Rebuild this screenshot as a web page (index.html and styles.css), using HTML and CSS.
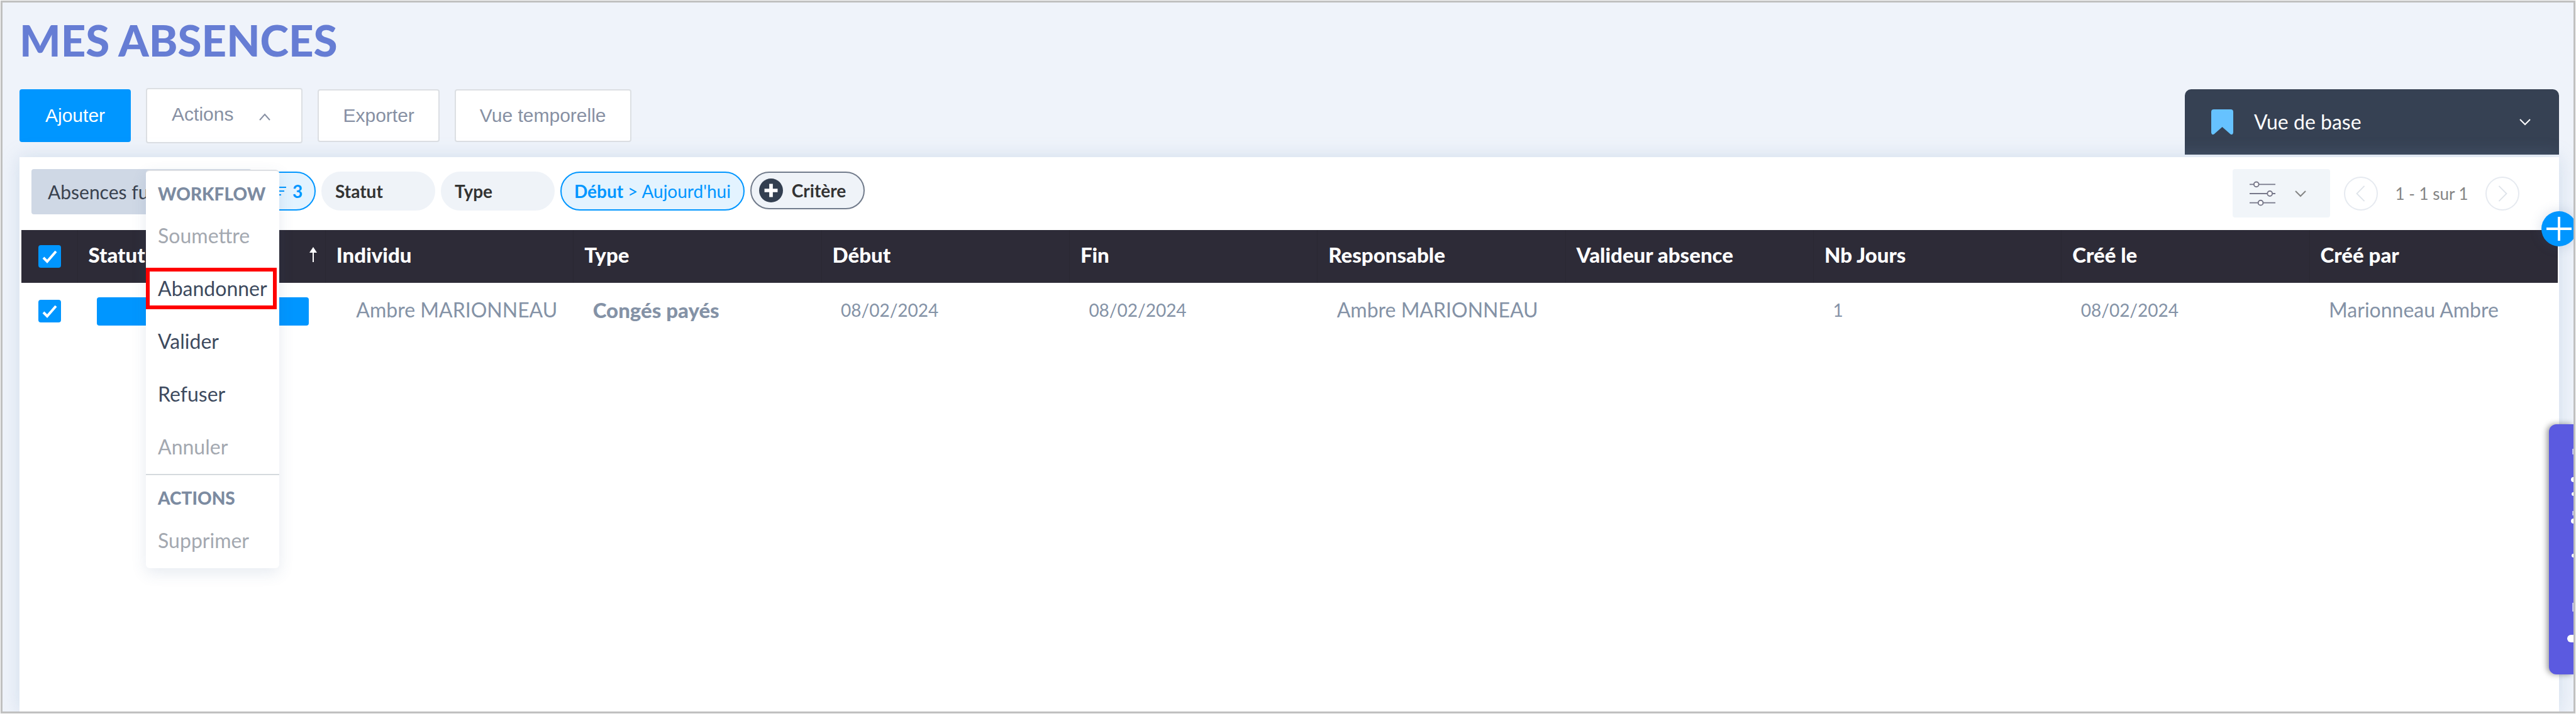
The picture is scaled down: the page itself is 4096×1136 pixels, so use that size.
FILE: index.html
```html
<!DOCTYPE html>
<html lang="fr">
<head>
<meta charset="utf-8">
<title>Mes absences</title>
<meta name="viewport" content="width=device-width, initial-scale=1">
<link rel="stylesheet" href="styles.css">
</head>
<body>
<div class="app">
  <h1 class="title">MES ABSENCES</h1>

  <div class="toolbar">
    <div class="toolbar-actions">
      <button class="btn btn-primary" type="button">Ajouter</button>
      <div class="dropdown">
        <button class="btn btn-dropdown" type="button" aria-haspopup="true" aria-expanded="true">Actions
          <svg class="chevron" viewBox="0 0 20 12" aria-hidden="true"><path d="M2 11 10 2l8 9"/></svg>
        </button>
        <div class="menu">
          <h2 class="menu-heading">WORKFLOW</h2>
          <ul class="menu-list">
            <li><button class="menu-item" type="button" disabled>Soumettre</button></li>
            <li><button class="menu-item menu-item-marked" type="button">Abandonner</button></li>
            <li><button class="menu-item" type="button">Valider</button></li>
            <li><button class="menu-item" type="button">Refuser</button></li>
            <li><button class="menu-item" type="button" disabled>Annuler</button></li>
          </ul>
          <h2 class="menu-heading menu-heading-split">ACTIONS</h2>
          <ul class="menu-list">
            <li><button class="menu-item" type="button" disabled>Supprimer</button></li>
          </ul>
        </div>
      </div>
      <button class="btn" type="button">Exporter</button>
      <button class="btn" type="button">Vue temporelle</button>
    </div>
    <button class="view-tab" type="button">
      <svg class="bookmark" viewBox="0 0 35 40" aria-hidden="true"><path d="M4 0h27q4 0 4 4v33q-1 5-5 2L17.500 28 5 39q-4 3-5-2V4q0-4 4-4z"/></svg>
      <span class="view-name">Vue de base</span>
      <svg class="chevron" viewBox="0 0 20 12" aria-hidden="true"><path d="M2 2l8 8 8-8"/></svg>
    </button>
  </div>

  <main class="panel">
    <div class="filters">
      <button class="saved-filter" type="button">Absences fu</button>
      <button class="chip chip-active chip-count" type="button">
        <svg class="lines" viewBox="0 0 24 16" aria-hidden="true"><path d="M0 2h24M4 8h17M8 14h8"/></svg>3
      </button>
      <button class="chip chip-wide" type="button">Statut</button>
      <button class="chip chip-wide" type="button">Type</button>
      <button class="chip chip-active" type="button"><span>Début <span class="chip-value">&gt; Aujourd'hui</span></span></button>
      <button class="chip chip-add" type="button">
        <svg class="add" viewBox="0 0 40 40" aria-hidden="true"><circle cx="20" cy="20" r="20"/><path d="M20 9v22M9 20h22"/></svg>Critère
      </button>
      <div class="paging">
        <button class="settings" type="button" aria-label="Affichage">
          <svg class="sliders" viewBox="0 0 42 40" aria-hidden="true"><path d="M0 5h42M0 20h42M0 35h42"/><circle cx="11" cy="5" r="4"/><circle cx="33" cy="20" r="4"/><circle cx="18" cy="35" r="4"/></svg>
          <svg class="chevron" viewBox="0 0 20 12" aria-hidden="true"><path d="M2 2l8 8 8-8"/></svg>
        </button>
        <button class="page-btn" type="button" aria-label="Page précédente"><svg viewBox="0 0 54 54" aria-hidden="true"><path d="M33 14 20 27l13 13"/></svg></button>
        <span class="page-info">1 - 1 sur 1</span>
        <button class="page-btn" type="button" aria-label="Page suivante"><svg viewBox="0 0 54 54" aria-hidden="true"><path d="M21 14l13 13-13 13"/></svg></button>
      </div>
    </div>

    <table class="grid">
      <colgroup><col class="col-check"><col span="10"></colgroup>
      <thead>
        <tr>
          <th class="cell-check"><input class="check" type="checkbox" aria-label="Tout sélectionner" checked></th>
          <th><span class="sorted">Statut <svg class="sort" viewBox="0 0 14 24" aria-hidden="true"><path d="M7 24V6" fill="none" stroke="#fff" stroke-width="2"/><path d="M7 0l6 9H1z" fill="#fff"/></svg></span></th>
          <th>Individu</th>
          <th>Type</th>
          <th>Début</th>
          <th>Fin</th>
          <th>Responsable</th>
          <th>Valideur absence</th>
          <th>Nb Jours</th>
          <th>Créé le</th>
          <th>Créé par</th>
        </tr>
      </thead>
      <tbody>
        <tr>
          <td class="cell-check"><input class="check" type="checkbox" aria-label="Sélectionner la ligne" checked></td>
          <td class="cell-status"><div class="status"></div></td>
          <td class="cell-person">Ambre MARIONNEAU</td>
          <td class="cell-type">Congés payés</td>
          <td class="cell-number">08/02/2024</td>
          <td class="cell-number">08/02/2024</td>
          <td>Ambre MARIONNEAU</td>
          <td></td>
          <td class="cell-number">1</td>
          <td class="cell-number">08/02/2024</td>
          <td>Marionneau Ambre</td>
        </tr>
      </tbody>
    </table>
    <button class="add-column" type="button" aria-label="Ajouter une colonne"><svg viewBox="0 0 56 56" aria-hidden="true"><path d="M28 9v38M8 28h40"/></svg></button>
  </main>

  <aside class="side-tab">
    <svg class="side-marks" viewBox="0 0 10 398" aria-hidden="true"><path d="M8 39h2v9H8zM8 138h2v7H8zM8 284h2v14H8z" opacity=".6"/><circle cx="10" cy="88" r="4"/><circle cx="10" cy="111" r="3"/><circle cx="10" cy="154" r="4"/><circle cx="10" cy="209" r="3"/><rect x="0" y="335" width="20" height="12" rx="6"/></svg>
  </aside>
</div>
</body>
</html>
```
FILE: styles.css
```css
* { box-sizing: border-box; }

body {
  margin: 0;
  padding: 1px;
  background: #f8f8f8;
  color: #8492a6;
  font: 32px/40px Lato, "Open Sans", sans-serif;
}

button {
  margin: 0;
  padding: 0;
  border: 0;
  background: none;
  color: inherit;
  font: inherit;
  white-space: nowrap;
}

svg { display: block; flex: none; fill: none; }

.app {
  position: relative;
  display: flex;
  flex-direction: column;
  min-height: calc(100vh - 2px);
  padding: 20px 23px 0 27px;
  overflow: hidden;
  border: 3px solid #c0c0c0;
  background: #eff3fa;
}

.title {
  margin: 0 0 36px;
  color: #667dd4;
  font-size: 69px;
  font-weight: 900;
  line-height: 80px;
}

.chevron { width: 20px; height: 12px; stroke: currentColor; stroke-width: 2; }

/* Toolbar */
.toolbar {
  display: flex;
  align-items: flex-end;
  justify-content: space-between;
  margin-bottom: 4px;
}

.toolbar-actions {
  display: flex;
  align-items: center;
  align-self: flex-start;
  gap: 24px;
  font-family: "Liberation Sans", Arial, sans-serif;
  font-size: 30px;
}

.btn {
  height: 84px;
  padding: 0 38px;
  border: 2px solid #dcdfe3;
  border-radius: 4px;
  background: #fff;
  color: #8790a3;
}

.btn-primary {
  padding: 0 39px;
  border-color: #0096ff;
  background: #0096ff;
  color: #fff;
}

.btn-dropdown {
  display: flex;
  align-items: center;
  gap: 40px;
  height: 88px;
  padding: 0 48px 4px 39px;
}

.btn-dropdown .chevron { margin-top: 8px; }

.dropdown { position: relative; }

.menu {
  position: absolute;
  z-index: 2;
  top: 130px;
  left: 0;
  width: 212px;
  padding-bottom: 2px;
  border-top: 2px solid #dcdfe3;
  border-radius: 6px;
  background: #fff;
  box-shadow: 0 8px 24px rgba(60, 90, 140, .12);
  font-family: Lato, "Open Sans", sans-serif;
  font-size: 32px;
}

.menu-heading {
  height: 61px;
  margin: 0;
  padding: 16px 0 0 19px;
  color: #7c8ba1;
  font-size: 28px;
  font-weight: 900;
}

.menu-heading-split {
  height: 64px;
  margin-top: 1px;
  border-top: 2px solid #d5dade;
}

.menu-list { margin: 0; padding: 0; list-style: none; }

.menu-list li { display: flex; align-items: center; height: 84px; }

.menu-item {
  width: 208px;
  height: 66px;
  padding: 0 0 0 19px;
  color: #3d4a5e;
  text-align: left;
}

.menu-item:disabled { color: #a3a8b0; }

.menu-item-marked {
  padding: 0 0 0 13px;
  border: 6px solid #f00;
}

.view-tab {
  display: flex;
  align-items: center;
  width: 595px;
  height: 104px;
  margin-top: 2px;
  padding: 0 44px 0 42px;
  border-radius: 10px 10px 0 0;
  background: #364153;
  color: #fff;
}

.bookmark { width: 35px; height: 40px; fill: #66c2ff; }
.view-name { flex: 1; padding-left: 33px; text-align: left; }

/* Panel and filter bar */
.panel {
  position: relative;
  flex: 1;
  padding-top: 19px;
  background: #fff;
  box-shadow: 0 0 28px rgba(130, 165, 200, .28);
}

.filters {
  display: flex;
  align-items: flex-start;
  gap: 9px;
  margin-bottom: 20px;
  padding: 0 63px 0 19px;
}

.saved-filter {
  width: 350px;
  height: 72px;
  padding: 0 26px;
  border-radius: 4px;
  background: #cfd8e5;
  color: #39424f;
  font-size: 30px;
  text-align: left;
}

.chip {
  display: flex;
  align-items: center;
  height: 62px;
  margin-top: 4px;
  padding: 0 20px;
  border: 2px solid #eff3f8;
  border-radius: 31px;
  background: #eff3f8;
  color: #333;
  font-size: 28px;
  font-weight: 700;
}

.chip-wide { width: 181px; }
.chip-active { border-color: #0096ff; background: #e3f3ff; color: #0096ff; }
.chip-value { font-weight: 400; }
.chip-count { gap: 10px; width: 93px; }
.chip-add { gap: 14px; height: 60px; padding: 0 28px 0 12px; border-color: #717b8b; }

.lines { width: 24px; height: 16px; stroke: #0096ff; stroke-width: 2; }
.add { width: 38px; height: 38px; fill: #333f50; stroke: #fff; stroke-width: 6; }
.add circle { stroke: none; }

.paging { display: flex; align-items: center; margin-left: auto; color: #858585; }

.settings {
  display: flex;
  align-items: center;
  gap: 30px;
  height: 77px;
  margin-right: 22px;
  padding: 0 37px 0 27px;
  border-radius: 4px;
  background: #f1f5f9;
}

.sliders { width: 41px; height: 40px; fill: #fff; stroke: #77788a; stroke-width: 2; }

.page-btn { width: 54px; height: 54px; border: 2px solid #e6eaf0; border-radius: 50%; }
.page-btn svg { stroke: #dfe4ea; stroke-width: 2; }
.page-info { width: 171px; font-size: 26px; text-align: center; }

/* Data table */
.grid {
  width: calc(100% - 5px);
  margin: 0 2px 0 3px;
  border-collapse: collapse;
  table-layout: fixed;
  text-align: left;
}

.col-check { width: 89px; }

.grid th {
  height: 84px;
  padding: 0 12px 6px 17px;
  border-right: 1px solid #292732;
  background: #2d2b37;
  color: #fff;
  font-size: 33px;
  font-weight: 900;
}

.grid td { height: 90px; padding: 0 0 5px 31px; }

.grid .cell-check { padding: 0 0 0 27px; }
.grid .cell-status { padding: 0 26px 0 31px; }
.grid .cell-person { padding-left: 49px; }
.cell-type { font-size: 33px; font-weight: 900; }
.cell-number { font-size: 28px; }

.sorted { display: flex; align-items: center; justify-content: space-between; }
.sort { width: 14px; height: 24px; }

.status { height: 45px; border-radius: 4px; background: #0096ff; }

.check {
  display: block;
  width: 36px;
  height: 36px;
  margin: 0;
  appearance: none;
  border-radius: 4px;
  background: #0096ff url("data:image/svg+xml,%3Csvg xmlns='http://www.w3.org/2000/svg' viewBox='0 0 36 36'%3E%3Cpath d='M8 20l6 6L28 10' fill='none' stroke='%23fff' stroke-width='4'/%3E%3C/svg%3E");
}

.add-column {
  position: absolute;
  top: 86px;
  right: -28px;
  width: 56px;
  height: 56px;
  border-radius: 50%;
  background: #0096ff;
  box-shadow: 0 0 20px rgba(60, 90, 140, .2);
}

.add-column svg { stroke: #fff; stroke-width: 4; }

.side-tab {
  position: absolute;
  top: 671px;
  right: 0;
  display: flex;
  justify-content: flex-end;
  width: 39px;
  height: 398px;
  border-radius: 12px 0 0 12px;
  background: #5b5ae0;
  box-shadow: -3px 0 10px rgba(0, 0, 0, .4);
}

.side-marks { width: 10px; height: 398px; fill: #fff; }
```
